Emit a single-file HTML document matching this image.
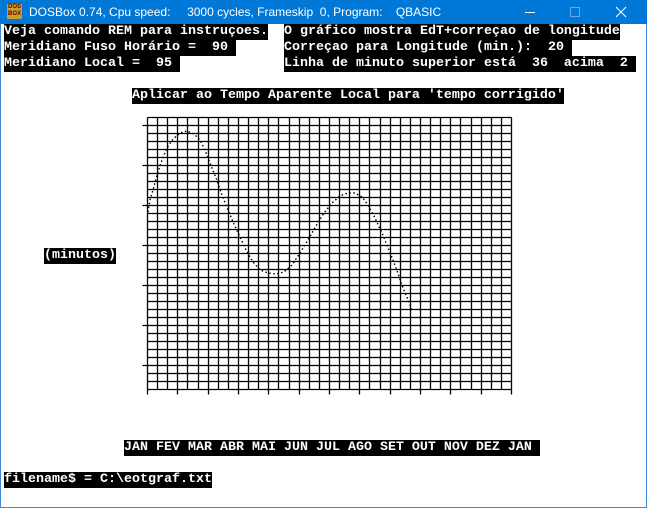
<!DOCTYPE html>
<html><head><meta charset="utf-8"><style>
*{margin:0;padding:0}
body{width:647px;height:508px;overflow:hidden;background:#fff;position:relative;font-family:"Liberation Mono",monospace}
#tb{position:absolute;left:0;top:0;width:647px;height:24px;background:#0078d7;color:#fff;font:12px "Liberation Sans",sans-serif}
#tb .t{position:absolute;left:29px;top:5px;white-space:pre}
.ic{position:absolute;left:7px;top:4px;width:15px;height:15px;background:#c8a030;color:#600;font:bold 6px/7px "Liberation Sans",sans-serif;text-align:center}
.t1{position:absolute;white-space:pre;background:#000;color:#fff;font:bold 13.33px/16px "Liberation Mono",monospace;height:16px}
#lb{position:absolute;left:0;top:24px;width:1px;height:484px;background:#3c8ad8}
#rb{position:absolute;left:646px;top:24px;width:1px;height:484px;background:#3c8ad8}
#bb{position:absolute;left:0;top:507px;width:647px;height:1px;background:#3c8ad8}
</style></head><body>
<div id="tb"><div class="ic">DOS<br>BOX</div><div class="t">DOSBox 0.74, Cpu speed:     3000 cycles, Frameskip  0, Program:    QBASIC</div>
<svg style="position:absolute;left:0;top:0" width="647" height="24"><line x1="525" y1="12.5" x2="535" y2="12.5" stroke="#fff"/><rect x="570.5" y="7.5" width="9" height="9" fill="none" stroke="#6aa8e8"/><path d="M616 7L626 17M626 7L616 17" stroke="#fff"/></svg></div>
<div id="lb"></div><div id="rb"></div><div id="bb"></div>
<div class="t1" style="left:4px;top:24px">Veja comando REM para instruçoes.</div>
<div class="t1" style="left:4px;top:40px">Meridiano Fuso Horário =  90 </div>
<div class="t1" style="left:4px;top:56px">Meridiano Local =  95 </div>
<div class="t1" style="left:284px;top:24px">O gráfico mostra EdT+correçao de longitude</div>
<div class="t1" style="left:284px;top:40px">Correçao para Longitude (min.):  20 </div>
<div class="t1" style="left:284px;top:56px">Linha de minuto superior está  36  acima  2 </div>
<div class="t1" style="left:132px;top:88px">Aplicar ao Tempo Aparente Local para 'tempo corrigido'</div>
<div class="t1" style="left:44px;top:248px">(minutos)</div>
<div class="t1" style="left:124px;top:440px">JAN FEV MAR ABR MAI JUN JUL AGO SET OUT NOV DEZ JAN </div>
<div class="t1" style="left:4px;top:472px">filename$ = C:\eotgraf.txt</div>
<svg style="position:absolute;left:0;top:0" width="647" height="508">
<g stroke="#000" stroke-width="1.3" fill="none" transform="translate(0.5,0.5)">
<path d="M147 117V394M157 117V389M167 117V389M177 117V394M187 117V389M198 117V389M208 117V394M218 117V389M228 117V389M238 117V394M248 117V389M258 117V389M268 117V394M278 117V389M289 117V389M299 117V394M309 117V389M319 117V389M329 117V394M339 117V389M349 117V389M359 117V394M369 117V389M380 117V389M390 117V394M400 117V389M410 117V389M420 117V394M430 117V389M440 117V389M450 117V394M460 117V389M471 117V389M481 117V394M491 117V389M501 117V389M511 117V394"/>
<path d="M147 117H511M147 125H511M147 133H511M147 141H511M147 149H511M147 157H511M147 165H511M147 173H511M147 181H511M147 189H511M147 197H511M147 205H511M147 213H511M147 221H511M147 229H511M147 237H511M147 245H511M147 253H511M147 261H511M147 269H511M147 277H511M147 285H511M147 293H511M147 301H511M147 309H511M147 317H511M147 325H511M147 333H511M147 341H511M147 349H511M147 357H511M147 365H511M147 373H511M147 381H511M147 389H511"/>
<path d="M142 125H147M142 165H147M142 205H147M142 245H147M142 285H147M142 325H147M142 365H147"/>
</g>
<polyline fill="none" stroke="#000" stroke-width="1.4" stroke-dasharray="1.5 2.5" points="148,212 150,200 153,190 157,175 162,160 167,148 173,139 180,133 187,131 194,134 200,140 205,150 210,163 216,178 222,195 228,210 234,224 240,237 246,250 253,262 260,270 268,273 276,274 284,272 292,265 300,253 308,240 316,226 324,213 332,203 340,196 348,193 355,193 362,197 368,205 375,218 382,233 389,250 396,268 403,288 409,302 412,310"/>
</svg>
</body></html>
